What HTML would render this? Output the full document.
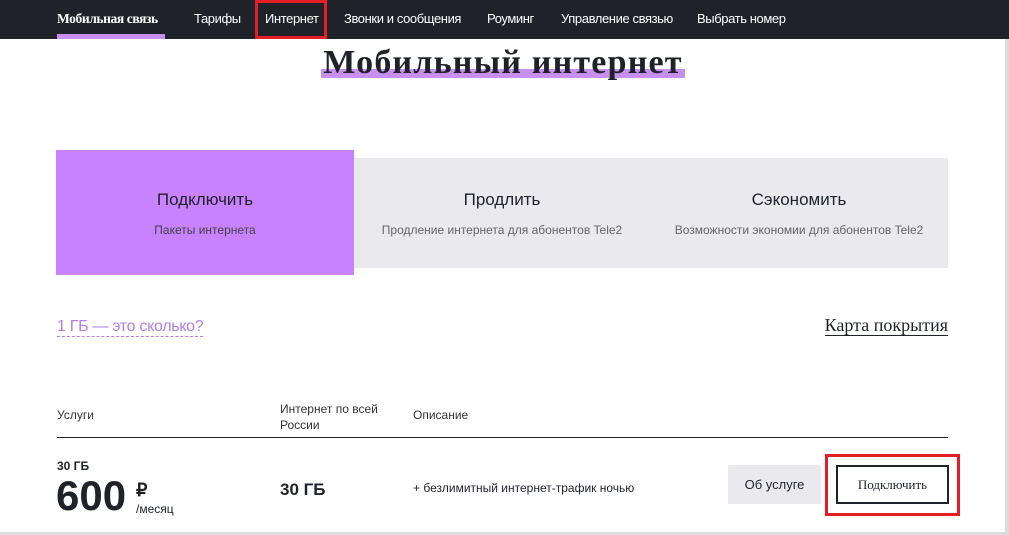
<!DOCTYPE html><html><head><meta charset="utf-8"><style>
body{margin:0;width:1009px;height:535px;background:#fff;font-family:"Liberation Sans",sans-serif;color:#1f2229;position:relative;overflow:hidden}
.a{position:absolute;white-space:nowrap}
nav{position:absolute;left:0;top:0;width:1009px;height:39px;background:#1f2229}
nav span{position:absolute;top:11px;font-size:13px;color:#fff;letter-spacing:-0.4px}
.red{position:absolute;border:3px solid #e41e26;box-sizing:border-box}
</style></head><body>
<nav>
<span style="left:57px;font-weight:bold;font-family:'Liberation Serif',serif;font-size:13.5px">Мобильная связь</span>
<div class="a" style="left:57px;top:34px;width:108px;height:5px;background:#c88ef0"></div>
<span style="left:194px">Тарифы</span>
<span style="left:265px">Интернет</span>
<span style="left:344px">Звонки и сообщения</span>
<span style="left:487px">Роуминг</span>
<span style="left:561px">Управление связью</span>
<span style="left:697px">Выбрать номер</span>
</nav>
<div class="red" style="left:255px;top:0;width:72px;height:39px"></div>
<div class="a" style="left:321px;top:69px;width:364px;height:9px;background:#c88ef0"></div>
<div class="a" style="left:321px;top:44px;width:364px;text-align:center;font-family:'Liberation Serif',serif;font-weight:bold;font-size:34px;letter-spacing:1.2px">Мобильный интернет</div>
<div class="a" style="left:56px;top:150px;width:298px;height:125px;background:#c882fd"></div>
<div class="a" style="left:354px;top:158px;width:594px;height:110px;background:#e9e9ee"></div>
<div class="a" style="left:56px;top:190px;width:298px;text-align:center;font-size:17px">Подключить</div>
<div class="a" style="left:56px;top:223px;width:298px;text-align:center;font-size:12px;color:#444">Пакеты интернета</div>
<div class="a" style="left:354px;top:190px;width:296px;text-align:center;font-size:17px">Продлить</div>
<div class="a" style="left:354px;top:223px;width:296px;text-align:center;font-size:12px;color:#666">Продление интернета для абонентов Tele2</div>
<div class="a" style="left:650px;top:190px;width:298px;text-align:center;font-size:17px">Сэкономить</div>
<div class="a" style="left:650px;top:223px;width:298px;text-align:center;font-size:12px;color:#666">Возможности экономии для абонентов Tele2</div>
<div class="a" style="left:57px;top:318px;font-size:16px;color:#b57de8;border-bottom:1px dashed #b57de8;letter-spacing:-0.3px">1 ГБ — это сколько?</div>
<div class="a" style="right:61px;top:315px;font-size:18px;font-family:'Liberation Serif',serif;border-bottom:1px solid #1f2229;line-height:20px">Карта покрытия</div>
<div class="a" style="left:57px;top:408px;font-size:12px;color:#333">Услуги</div>
<div class="a" style="left:280px;top:401px;font-size:12px;color:#333;line-height:16px">Интернет по всей<br>России</div>
<div class="a" style="left:413px;top:408px;font-size:12px;color:#333">Описание</div>
<div class="a" style="left:57px;top:437px;width:891px;height:1px;background:#1f2229"></div>
<div class="a" style="left:57px;top:459px;font-size:12px;font-weight:bold">30 ГБ</div>
<div class="a" style="left:56px;top:472px;font-size:42px;font-weight:bold">600</div>
<div class="a" style="left:136px;top:480px;font-size:18px;font-weight:bold">₽</div>
<div class="a" style="left:136px;top:502px;font-size:12px">/месяц</div>
<div class="a" style="left:280px;top:480px;font-size:17px;font-weight:bold">30 ГБ</div>
<div class="a" style="left:413px;top:481px;font-size:12px">+ безлимитный интернет-трафик ночью</div>
<div class="a" style="left:728px;top:465px;width:93px;height:39px;background:#e9e9ee;text-align:center;line-height:39px;font-size:13px">Об услуге</div>
<div class="red" style="left:825px;top:454px;width:135px;height:62px"></div>
<div class="a" style="left:836px;top:465px;width:113px;height:39px;border:2px solid #1f2229;box-sizing:border-box;text-align:center;line-height:35px;font-size:13px;font-family:'Liberation Serif',serif">Подключить</div>
<div class="a" style="left:0;top:532px;width:1009px;height:3px;background:#ddd"></div>
<div class="a" style="left:1005px;top:39px;width:4px;height:496px;background:#ddd"></div>
</body></html>
